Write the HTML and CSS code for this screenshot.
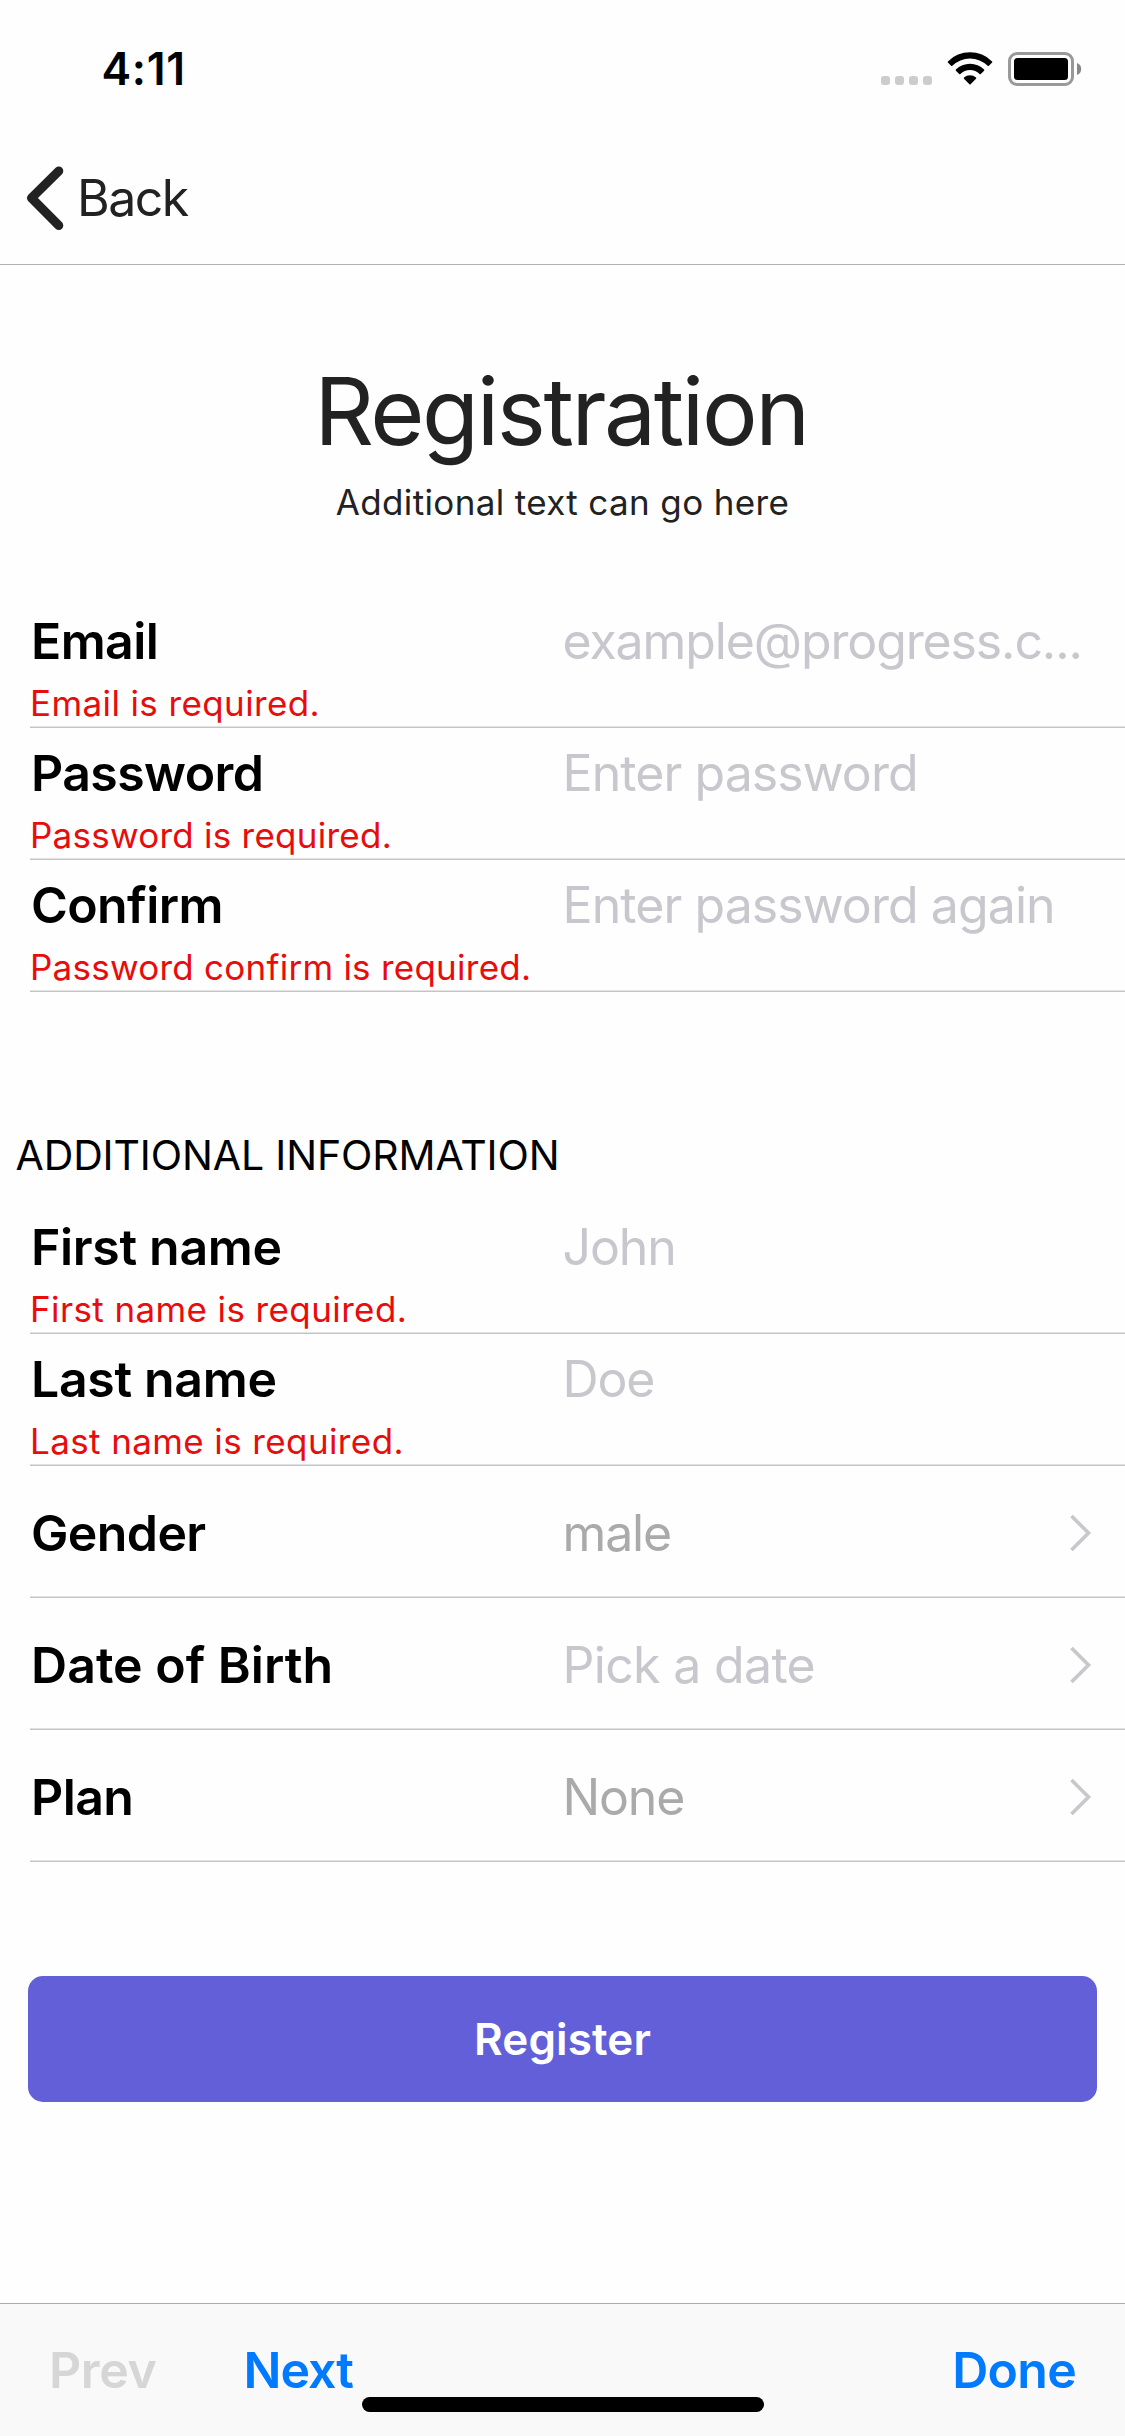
FILE: index.html
```html
<!DOCTYPE html>
<html lang="en">
<head>
<meta charset="utf-8">
<title>Registration</title>
<link rel="stylesheet" href="styles.css">
</head>
<body>
<div class="screen">
  <header class="header">
    <div class="status">
      <span class="status-time">4:11</span>
      <div class="status-icons">
        <div class="signal"><i></i><i></i><i></i><i></i></div>
        <svg class="wifi" width="46" height="34" viewBox="0 0 46 34">
          <path d="M.9 9.4A31.2 31.2 0 0 1 45.1 9.4Q45.6 10 45.1 10.6L41.9 13.8Q41.3 14.3 40.7 13.8A25.3 25.3 0 0 0 5.3 13.8Q4.7 14.3 4.1 13.8L.9 10.6Q.4 10 .9 9.4Z"/>
          <path d="M8.9 17.6A20 20 0 0 1 37.1 17.6Q37.6 18.2 37.1 18.8L33.8 22Q33.2 22.5 32.6 22A13.8 13.8 0 0 0 13.4 22Q12.8 22.5 12.2 22L8.9 18.8Q8.4 18.2 8.9 17.6Z"/>
          <path d="M17 25.6A8.8 8.8 0 0 1 29 25.6Q29.6 26.2 29 26.8L23.6 32.2Q23 32.8 22.4 32.2L17 26.8Q16.4 26.2 17 25.6Z"/>
        </svg>
        <svg class="battery" width="74" height="34" viewBox="0 0 74 34">
          <rect x="1.5" y="1.5" width="63" height="31" rx="7.5" fill="none" stroke="#999" stroke-width="3"/>
          <rect x="6" y="6" width="54" height="22" rx="3.5"/>
          <path d="M69 11Q73.2 12.6 73.2 17T69 23Z" fill="#888"/>
        </svg>
      </div>
    </div>
    <div class="nav">
      <svg width="38" height="64" viewBox="0 0 38 64"><path d="M32.8 5L5.5 32L32.8 59.5" fill="none" stroke="#222" stroke-width="9" stroke-linecap="round" stroke-linejoin="round"/></svg>
      <span class="nav-back">Back</span>
    </div>
  </header>

  <main class="content">
    <h1 class="title">Registration</h1>
    <p class="subtitle">Additional text can go here</p>

    <section class="group">
      <div class="row">
        <div class="label">Email</div><div class="value placeholder value-email">example@progress.c...</div>
        <div class="error">Email is required.</div>
      </div>
      <div class="row">
        <div class="label">Password</div><div class="value placeholder">Enter password</div>
        <div class="error error-tight">Password is required.</div>
      </div>
      <div class="row">
        <div class="label">Confirm</div><div class="value placeholder">Enter password again</div>
        <div class="error error-tight">Password confirm is required.</div>
      </div>
    </section>

    <h2 class="group-title">ADDITIONAL INFORMATION</h2>
    <section class="group">
      <div class="row">
        <div class="label label-name">First name</div><div class="value placeholder value-short">John</div>
        <div class="error">First name is required.</div>
      </div>
      <div class="row">
        <div class="label label-name">Last name</div><div class="value placeholder value-short">Doe</div>
        <div class="error">Last name is required.</div>
      </div>
      <div class="row row-picker">
        <div class="label">Gender</div><div class="value value-short">male</div>
        <svg class="chevron" width="22" height="38" viewBox="0 0 22 38"><path d="M1.5 2L18.5 19L1.5 36"/></svg>
      </div>
      <div class="row row-picker">
        <div class="label label-date">Date of Birth</div><div class="value placeholder value-date">Pick a date</div>
        <svg class="chevron" width="22" height="38" viewBox="0 0 22 38"><path d="M1.5 2L18.5 19L1.5 36"/></svg>
      </div>
      <div class="row row-picker">
        <div class="label">Plan</div><div class="value value-short">None</div>
        <svg class="chevron" width="22" height="38" viewBox="0 0 22 38"><path d="M1.5 2L18.5 19L1.5 36"/></svg>
      </div>
    </section>

    <button class="register">Register</button>
  </main>

  <footer class="toolbar">
    <span class="tool tool-off">Prev</span>
    <span class="tool tool-next">Next</span>
    <span class="tool tool-done">Done</span>
    <div class="home"></div>
  </footer>
</div>
</body>
</html>
```
FILE: styles.css
```css
* { box-sizing: border-box; }
body { margin: 0; background: #fefefe; }
h1, h2, p { margin: 0; font-weight: 400; }
svg { display: block; flex: none; }

.screen {
  display: flex;
  flex-direction: column;
  width: 1125px;
  height: 2436px;
  overflow: hidden;
  background: #fefefe;
  color: #000;
  font-family: Inter, "Liberation Sans", sans-serif;
  white-space: nowrap;
}

.header { height: 265px; border-bottom: 1px solid #b2b2b2; }
.status {
  display: flex;
  align-items: center;
  justify-content: space-between;
  height: 138px;
  padding: 0 43px 0 101.5px;
}
.status-time { font-size: 44.5px; font-weight: 600; letter-spacing: .7px; }
.status-icons { display: flex; height: 34px; }
.signal { display: flex; align-items: flex-end; gap: 5px; padding-bottom: 1px; }
.signal i { width: 9px; height: 9px; border-radius: 3px; background: #ccc; }
.wifi { margin-left: 15px; }
.battery { margin-left: 15px; }
.nav {
  display: flex;
  align-items: center;
  height: 126px;
  padding: 0 0 6px 26px;
}
.nav-back { margin-left: 13px; color: #222; font-size: 50px; letter-spacing: -1.5px; }

.content { flex: 1; display: flex; flex-direction: column; }
.title {
  margin-top: 91px;
  padding-right: 3px;
  color: #222;
  font-size: 93px;
  line-height: 110px;
  letter-spacing: -2.43px;
  text-align: center;
}
.subtitle {
  margin: 16px 0 74px;
  color: #222;
  font-size: 35px;
  line-height: 40px;
  letter-spacing: .36px;
  text-align: center;
}

.group { margin-left: 30px; }
.group-title {
  margin: 138px 0 22px 15.5px;
  font-size: 41px;
  line-height: 50px;
  letter-spacing: -.12px;
}
.row {
  display: grid;
  grid-template-columns: 532px 508px 1fr;
  align-content: start;
  height: 132px;
  padding-top: 15px;
  background: linear-gradient(#e2e2e2 50%, #c4c4c4 50%) bottom / 100% 2px no-repeat;
}
.row-picker { padding-top: 37px; }
.label { padding-left: 1px; font-size: 50px; font-weight: 600; line-height: 60px; letter-spacing: -.6px; }
.label-name { letter-spacing: -.32px; }
.label-date { letter-spacing: .03px; }
.value { padding-left: .5px; color: #aaa; font-size: 50px; line-height: 60px; letter-spacing: -.92px; }
.value-email { letter-spacing: -1.12px; }
.value-short { letter-spacing: -1.15px; }
.value-date { letter-spacing: -.67px; }
.placeholder { color: #c7c7cd; }
.error {
  grid-column: 1 / -1;
  margin-top: 12px;
  color: #e80c0c;
  font-size: 35px;
  line-height: 40px;
  letter-spacing: .39px;
}
.error-tight { letter-spacing: .25px; }
.chevron { align-self: center; fill: none; stroke: #c7c7cc; stroke-width: 3.6; }

.register {
  height: 126px;
  margin: 114px 28px 0;
  padding: 0 0 1px;
  border: 0;
  border-radius: 15px;
  background: #635fd9;
  color: #fff;
  font: 600 44px Inter, "Liberation Sans", sans-serif;
  letter-spacing: .14px;
}

.toolbar {
  position: relative;
  display: flex;
  height: 133px;
  padding: 36px 49px 0 49px;
  border-top: 1px solid #adadad;
  background: #f9f9f9;
}
.tool { color: #007aff; font-size: 50px; font-weight: 600; line-height: 60px; letter-spacing: -1px; }
.tool-off { width: 194.5px; color: #d6d6d6; letter-spacing: -.4px; }
.tool-done { margin-left: auto; letter-spacing: -.71px; }
.home {
  position: absolute;
  left: 362px;
  top: 93px;
  width: 402px;
  height: 15px;
  border-radius: 7.5px;
  background: #000;
}
```
